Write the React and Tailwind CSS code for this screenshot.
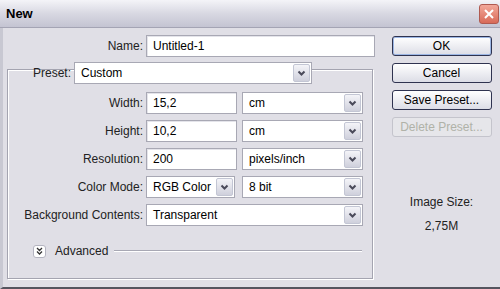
import React from 'react';

const font = { fontFamily: '"Liberation Sans", Arial, sans-serif' };

const Arrow = () => (
    <div className="w-[17px] h-full flex items-center justify-center rounded-[2px] border border-[#c3c6d4] bg-gradient-to-b from-[#f4f4f8] to-[#cfd0dc]">
        <svg width="9" height="7" viewBox="0 0 9 7">
            <path d="M1.5 1.5 L4.5 4.5 L7.5 1.5" stroke="#4a4a5a" strokeWidth="2" fill="none" />
        </svg>
    </div>
);

const Field = ({ value, w }) => (
    <div className={`${w} h-[22px] bg-white border border-[#a8a8b4] shadow-[inset_1px_1px_0_#e4e4ea] flex items-center px-[6px] text-[12px] text-black`}>
        {value}
    </div>
);

const Select = ({ value, w }) => (
    <div className={`${w} h-[22px] bg-white border border-[#a8a8b4] flex items-center text-[12px] text-black`}>
        <span className="flex-1 pl-[6px] truncate">{value}</span>
        <div className="h-full py-[1px] pr-[1px]"><Arrow /></div>
    </div>
);

const Label = ({ children }) => (
    <div className="w-[143px] text-right pr-[3px] text-[12px] text-[#222] shrink-0">{children}</div>
);

const Btn = ({ children, def, disabled }) => (
    <div className={`w-[100px] h-[20px] rounded-[3px] border flex items-center justify-center text-[12px] ${disabled ? 'border-[#c4c4cc] text-[#b0b2a8] bg-[#e6e6ea]' : 'border-[#2f3350] text-black bg-gradient-to-b from-white to-[#dcdde6]'} ${def ? 'shadow-[inset_0_0_0_1px_#9cb6e4]' : ''}`}>
        {children}
    </div>
);

export default function App() {
    return (
        <div className="w-[500px] h-[289px] bg-[#e0dfe6] flex flex-col overflow-hidden" style={font}>
            <div className="h-[28px] shrink-0 flex items-center justify-between pl-[6px] pr-[1px] bg-gradient-to-b from-[#f4f4f8] via-[#d8d8e2] to-[#c4c4d2] border-b border-[#a4a4b4]">
                <span className="text-[13px] font-bold text-black">New</span>
                <div className="w-[20px] h-[20px] rounded-[3px] border border-[#b05a50] bg-gradient-to-b from-[#f2a89a] to-[#d86a58] flex items-center justify-center">
                    <svg width="12" height="12" viewBox="0 0 12 12">
                        <path d="M2 2 L10 10 M10 2 L2 10" stroke="white" strokeWidth="2" />
                    </svg>
                </div>
            </div>
            <div className="flex-1 flex border-l-[3px] border-l-[#c8c8d2] border-b-[2px] border-b-[#55555f]">
                <div className="w-[380px] shrink-0 flex flex-col pt-[7px]">
                    <div className="flex items-center">
                        <Label>Name:</Label>
                        <Field value="Untitled-1" w="w-[229px]" />
                    </div>
                    <div className="flex items-center mt-[5px] relative z-10">
                        <div className="pl-[30px] pr-[3px] text-[12px] text-[#222]">Preset:</div>
                        <Select value="Custom" w="w-[238px]" />
                    </div>
                    <div className="-mt-[15px] ml-[4px] w-[366px] h-[210px] border border-[#a4a4b0] shadow-[1px_1px_0_white,inset_1px_1px_0_white] flex flex-col pt-[22px]">
                        {[['Width:', '15,2', 'cm'], ['Height:', '10,2', 'cm'], ['Resolution:', '200', 'pixels/inch']].map(([l, v, u]) => (
                            <div key={l} className="flex items-center mb-[6px] -ml-[5px]">
                                <Label>{l}</Label>
                                <Field value={v} w="w-[91px]" />
                                <div className="ml-[5px]"><Select value={u} w="w-[121px]" /></div>
                            </div>
                        ))}
                        <div className="flex items-center mb-[6px] -ml-[5px]">
                            <Label>Color Mode:</Label>
                            <Select value="RGB Color" w="w-[89px]" />
                            <div className="ml-[7px]"><Select value="8 bit" w="w-[121px]" /></div>
                        </div>
                        <div className="flex items-center -ml-[5px]">
                            <Label>Background Contents:</Label>
                            <Select value="Transparent" w="w-[217px]" />
                        </div>
                        <div className="flex items-center mt-[16px] ml-[25px]">
                            <div className="w-[13px] h-[13px] rounded-[3px] border border-[#b4b4c0] bg-white flex items-center justify-center">
                                <svg width="7" height="8" viewBox="0 0 7 8">
                                    <path d="M1 1 L3.5 3.5 L6 1 M1 4.5 L3.5 7 L6 4.5" stroke="#333" strokeWidth="1.3" fill="none" />
                                </svg>
                            </div>
                            <span className="ml-[9px] text-[12px] text-[#222]">Advanced</span>
                            <div className="ml-[6px] w-[248px] border-t border-[#a8a8b4] border-b border-b-white" />
                        </div>
                    </div>
                </div>
                <div className="flex-1 flex flex-col items-center pt-[8px]">
                    <div className="flex flex-col gap-[7px]">
                        <Btn def>OK</Btn>
                        <Btn>Cancel</Btn>
                        <Btn>Save Preset...</Btn>
                        <Btn disabled>Delete Preset...</Btn>
                    </div>
                    <div className="mt-[56px] text-[12px] text-[#222]">Image Size:</div>
                    <div className="mt-[6px] text-[12px] text-[#222]">2,75M</div>
                </div>
            </div>
        </div>
    );
}
